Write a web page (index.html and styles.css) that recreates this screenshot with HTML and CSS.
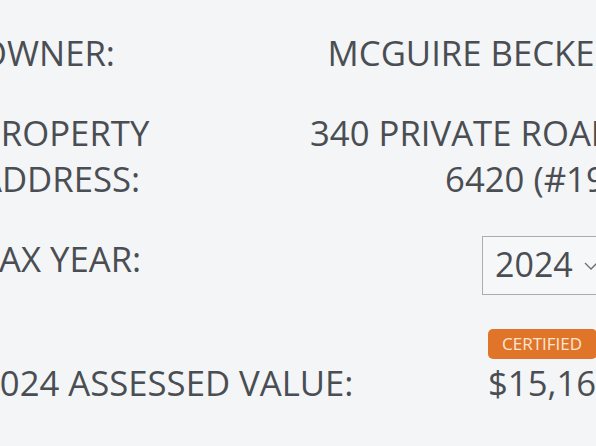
FILE: index.html
```html
<!DOCTYPE html>
<html lang="en">
<head>
    <meta charset="UTF-8">
    <meta name="viewport" content="width=device-width, initial-scale=1.0">
    <title>Property details</title>
    <link rel="stylesheet" href="styles.css">
</head>
<body>
    <div class="details">
        <div class="row">
            <div class="label">OWNER:</div>
            <div class="value">MCGUIRE BECKER</div>
        </div>
        <div class="row">
            <div class="label">PROPERTY<br>ADDRESS:</div>
            <div class="value">340 PRIVATE ROAD<br>6420 (#19)</div>
        </div>
        <div class="row">
            <div class="label">TAX YEAR:</div>
            <div class="year-select">
                <span>2024</span>
                <svg class="chevron" width="14" height="8" viewBox="0 0 14 8">
                    <polyline points="1,1 7,7 13,1" fill="none" stroke="#6b6f74" stroke-width="1.3"/>
                </svg>
            </div>
        </div>
        <div class="row">
            <div class="label label-bottom">2024 ASSESSED VALUE:</div>
            <div class="assessed">
                <span class="badge">CERTIFIED</span>
                <span class="amount">$15,160</span>
            </div>
        </div>
    </div>
</body>
</html>
```

FILE: styles.css
```css
body{
    margin: 0;
    padding: 0;
    background: #f3f5f7;
    overflow: hidden;
}
.details{
    width: 636px;
    margin-left: -20px;
    padding-top: 30px;
    display: flex;
    flex-direction: column;
    gap: 34px;
    font-family: "Open Sans", sans-serif;
    font-size: 34.7px;
    line-height: 46px;
    color: #4a4e53;
}
.row{
    display: flex;
    justify-content: space-between;
    align-items: flex-start;
}
.label{
    white-space: nowrap;
}
.label-bottom{
    align-self: flex-end;
}
.value{
    text-align: right;
    white-space: nowrap;
}
.year-select{
    width: 134px;
    box-sizing: border-box;
    display: flex;
    align-items: center;
    justify-content: space-between;
    padding: 4px 17px 7px 12px;
    border: 1px solid #a9adb1;
    background: #f6f7f9;
    font-size: 34px;
}
.chevron{
    margin-top: 3px;
}
.assessed{
    display: flex;
    flex-direction: column;
    align-items: flex-start;
}
.badge{
    height: 30px;
    padding: 0 15px 0 14px;
    margin-bottom: 1px;
    border-radius: 5px;
    background: #e07529;
    color: #fbe6d4;
    font-size: 17px;
    line-height: 30px;
}
```
